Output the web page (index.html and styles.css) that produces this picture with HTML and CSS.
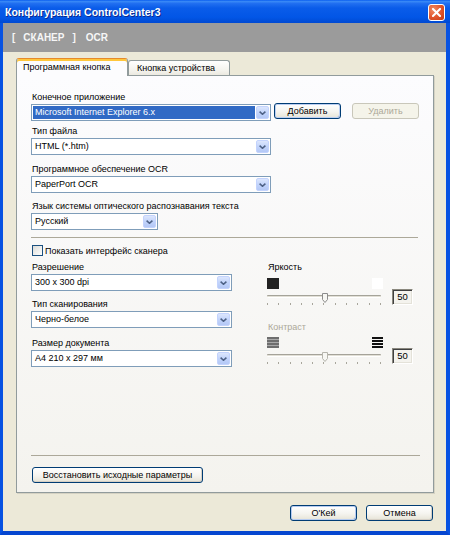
FILE: index.html
```html
<!DOCTYPE html>
<html lang="ru">
<head>
<meta charset="utf-8">
<title>Конфигурация ControlCenter3</title>
<link rel="stylesheet" href="styles.css">
</head>
<body>
<div class="window">
  <div class="titlebar">
    <span class="title">Конфигурация ControlCenter3</span>
    <span class="close"><svg width="9" height="9" viewBox="0 0 9 9"><path d="M1 1 L8 8 M8 1 L1 8" stroke="#fff" stroke-width="2" stroke-linecap="square"/></svg></span>
  </div>
  <div class="frame">
    <div class="header">
      <span>[</span><span class="h-scan">СКАНЕР</span><span class="h-br">]</span><span class="h-ocr">OCR</span>
    </div>
    <div class="body">
      <div class="tabs">
        <div class="tab active">Программная кнопка</div>
        <div class="tab inactive">Кнопка устройства</div>
      </div>
      <div class="panel">
        <div class="lbl">Конечное приложение</div>
        <div class="row">
          <div class="combo w240"><span class="val sel">Microsoft Internet Explorer 6.x</span><span class="arr"><svg width="7" height="4" viewBox="0 0 7 4"><path d="M0.6 0.6 L3.5 3.3 L6.4 0.6" stroke="#4d6185" stroke-width="1.5" fill="none"/></svg></span></div>
          <button class="btn add">Добавить</button>
          <button class="btn del disabled">Удалить</button>
        </div>

        <div class="lbl g2">Тип файла</div>
        <div class="combo w240"><span class="val">HTML (*.htm)</span><span class="arr"><svg width="7" height="4" viewBox="0 0 7 4"><path d="M0.6 0.6 L3.5 3.3 L6.4 0.6" stroke="#4d6185" stroke-width="1.5" fill="none"/></svg></span></div>

        <div class="lbl g3">Программное обеспечение OCR</div>
        <div class="combo w240"><span class="val">PaperPort OCR</span><span class="arr"><svg width="7" height="4" viewBox="0 0 7 4"><path d="M0.6 0.6 L3.5 3.3 L6.4 0.6" stroke="#4d6185" stroke-width="1.5" fill="none"/></svg></span></div>

        <div class="lbl g4">Язык системы оптического распознавания текста</div>
        <div class="combo w127"><span class="val">Русский</span><span class="arr"><svg width="7" height="4" viewBox="0 0 7 4"><path d="M0.6 0.6 L3.5 3.3 L6.4 0.6" stroke="#4d6185" stroke-width="1.5" fill="none"/></svg></span></div>

        <div class="sep sep1"></div>

        <div class="check-row"><span class="checkbox"></span><span>Показать интерфейс сканера</span></div>

        <div class="lower">
          <div class="col-left">
            <div class="lbl">Разрешение</div>
            <div class="combo w201"><span class="val">300 x 300 dpi</span><span class="arr"><svg width="7" height="4" viewBox="0 0 7 4"><path d="M0.6 0.6 L3.5 3.3 L6.4 0.6" stroke="#4d6185" stroke-width="1.5" fill="none"/></svg></span></div>
            <div class="lbl l2">Тип сканирования</div>
            <div class="combo w201"><span class="val">Черно-белое</span><span class="arr"><svg width="7" height="4" viewBox="0 0 7 4"><path d="M0.6 0.6 L3.5 3.3 L6.4 0.6" stroke="#4d6185" stroke-width="1.5" fill="none"/></svg></span></div>
            <div class="lbl l3">Размер документа</div>
            <div class="combo w201"><span class="val">A4 210 x 297 мм</span><span class="arr"><svg width="7" height="4" viewBox="0 0 7 4"><path d="M0.6 0.6 L3.5 3.3 L6.4 0.6" stroke="#4d6185" stroke-width="1.5" fill="none"/></svg></span></div>
          </div>
          <div class="col-right">
            <div class="lbl">Яркость</div>
            <div class="slider s1">
              <div class="slide-col">
                <div class="icons"><span class="ic-black"></span><span class="ic-white"></span></div>
                <div class="rail">
                  <div class="track"></div>
                  <div class="ticks"><i></i><i></i><i></i><i></i><i></i><i></i><i></i><i></i><i></i><i></i><i></i></div>
                  <svg class="thumb" width="6" height="10" viewBox="0 0 6 10"><path d="M0.5 0.5 H5.5 V6.5 L3 9.5 L0.5 6.5 Z" fill="#f7f7f3" stroke="#8c8c8c"/></svg>
                </div>
              </div>
              <div class="edit">50</div>
            </div>
            <div class="lbl dis c-lbl">Контраст</div>
            <div class="slider s2">
              <div class="slide-col">
                <div class="icons"><span class="ic-gray"></span><span class="ic-bars"></span></div>
                <div class="rail">
                  <div class="track"></div>
                  <div class="ticks"><i></i><i></i><i></i><i></i><i></i><i></i><i></i><i></i><i></i><i></i><i></i></div>
                  <svg class="thumb" width="6" height="10" viewBox="0 0 6 10"><path d="M0.5 0.5 H5.5 V6.5 L3 9.5 L0.5 6.5 Z" fill="#f7f7f3" stroke="#b5b4ac"/></svg>
                </div>
              </div>
              <div class="edit">50</div>
            </div>
          </div>
        </div>

        <div class="sep sep2"></div>
        <button class="btn reset">Восстановить исходные параметры</button>
      </div>
      <div class="actions">
        <button class="btn default">O'Кей</button>
        <button class="btn">Отмена</button>
      </div>
    </div>
  </div>
</div>
</body>
</html>
```

FILE: styles.css
```css
* { box-sizing: border-box; }
html, body { margin: 0; padding: 0; }
body {
  width: 450px;
  height: 535px;
  overflow: hidden;
  font-family: "Liberation Sans", Arial, sans-serif;
  font-size: 9px;
  color: #000;
  background: #0a4cdf;
}
.window {
  width: 450px;
  height: 535px;
  display: flex;
  flex-direction: column;
}
.titlebar {
  height: 23px;
  flex: none;
  display: flex;
  align-items: center;
  justify-content: space-between;
  padding: 0 5px 0 5px;
  background: linear-gradient(#0a5ef0 0%, #3a8af6 7%, #2270f1 14%, #0a5ce9 35%, #0256e6 75%, #0049d2 100%);
}
.title {
  color: #fff;
  font-weight: bold;
  font-size: 10.5px;
  text-shadow: 1px 1px 0 #0b2a8f;
  padding-top: 1px;
}
.close {
  width: 17px;
  height: 17px;
  border: 1px solid #fff;
  border-radius: 3px;
  background: radial-gradient(circle at 30% 30%, #f08a62, #e0532a 55%, #c43a12);
  display: flex;
  align-items: center;
  justify-content: center;
  margin-top: 2px;
}
.frame {
  flex: 1;
  display: flex;
  flex-direction: column;
  border-left: 3px solid #0752e2;
  border-right: 4px solid #0752e2;
  border-bottom: 4px solid #0546d0;
}
.header {
  height: 29px;
  flex: none;
  background: #9b9b9b;
  color: #f6f6f6;
  font-weight: bold;
  font-size: 10px;
  display: flex;
  align-items: center;
  padding-left: 9px;
}
.h-scan { margin-left: 8px; }
.h-br { margin-left: 8px; }
.h-ocr { margin-left: 10px; }
.body {
  flex: 1;
  background: #ece9d8;
  padding: 6px 12px 0 13px;
  display: flex;
  flex-direction: column;
}
.tabs {
  height: 17px;
  display: flex;
  align-items: flex-end;
  flex: none;
}
.tab {
  border: 1px solid #919b9c;
  border-bottom: none;
  border-radius: 3px 3px 0 0;
  display: flex;
  align-items: center;
  white-space: nowrap;
}
.tab.active {
  position: relative;
  z-index: 1;
  width: 112px;
  height: 18px;
  margin-bottom: -1px;
  padding: 0 0 1px 6px;
  background: #fcfcfe;
  border-top: 1px solid #e68b2c;
  box-shadow: inset 0 2px 0 #ffc73c;
}
.tab.inactive {
  width: 102px;
  height: 15px;
  padding-left: 8px;
  background: linear-gradient(#ffffff, #f3f2ec 70%, #ebe9e0);
}
.panel {
  width: 418px;
  height: 418px;
  flex: none;
  border: 1px solid #919b9c;
  background: linear-gradient(#fcfcfe, #f4f3ee);
  box-shadow: 1px 1px 0 #d5d2c3;
  padding: 14px 0 9px 14px;
  display: flex;
  flex-direction: column;
  align-items: flex-start;
}
.lbl {
  height: 14px;
  line-height: 14px;
  padding-left: 1px;
  white-space: nowrap;
}
.lbl.dis { color: #aca899; }
.g2 { margin-top: 3px; }
.g3 { margin-top: 7px; }
.g4 { margin-top: 6px; }
.row {
  display: flex;
  align-items: flex-start;
}
.combo {
  height: 17px;
  border: 1px solid #7f9db9;
  background: #fff;
  display: flex;
  padding: 1px;
}
.w240 { width: 240px; }
.w127 { width: 127px; }
.w201 { width: 201px; }
.combo .val {
  flex: 1;
  line-height: 13px;
  padding-left: 2px;
  white-space: nowrap;
  overflow: hidden;
}
.combo .val.sel {
  background: #316ac5;
  color: #fff;
  margin-right: 1px;
}
.combo .arr {
  width: 13px;
  flex: none;
  border: 1px solid #c3d3fd;
  border-radius: 2px;
  background: linear-gradient(#dce6fd, #c2d4fb 50%, #b4c8f6);
  display: flex;
  align-items: center;
  justify-content: center;
}
.btn {
  height: 16px;
  width: 67px;
  padding: 0;
  border: 1px solid #003c74;
  border-radius: 3px;
  background: linear-gradient(#ffffff, #f5f4ef 55%, #e6e3d6);
  box-shadow: inset -1px -1px 0 #d6d0c5;
  font-family: "Liberation Sans", Arial, sans-serif;
  font-size: 9px;
  color: #000;
  line-height: 14px;
}
.btn.add {
  margin-left: 3px;
  margin-top: -1px;
  box-shadow: inset 0 0 0 1px #bccff2, inset -1px -1px 0 #8fb0e6;
}
.btn.del { margin-left: 11px; margin-top: -1px; }
.btn.disabled {
  border-color: #c9c7ba;
  color: #aca899;
  background: #f5f4ea;
  box-shadow: none;
}
.sep {
  height: 1px;
  background: #aca899;
}
.sep1 { margin-top: 7px; width: 387px; }
.sep2 { margin-top: auto; width: 389px; }
.check-row {
  margin-top: 6px;
  height: 13px;
  display: flex;
  align-items: center;
  padding-left: 1px;
  white-space: nowrap;
}
.checkbox {
  width: 11px;
  height: 11px;
  border: 1px solid #1c5180;
  background: linear-gradient(135deg, #dcdcd7, #ffffff);
  margin-right: 2px;
}
.lower {
  margin-top: 3px;
  display: flex;
}
.col-left {
  width: 201px;
  display: flex;
  flex-direction: column;
}
.l2 { margin-top: 6px; }
.l3 { margin-top: 8px; }
.col-right {
  margin-left: 35px;
  display: flex;
  flex-direction: column;
}
.slider {
  display: grid;
  grid-template-columns: 116px 21px;
  column-gap: 9px;
  height: 27px;
}
.s1 { margin-top: 4px; }
.c-lbl { margin-top: 15px; }
.s2 { margin-top: 3px; }
.slide-col {
  display: flex;
  flex-direction: column;
}
.icons {
  height: 11px;
  display: flex;
  justify-content: space-between;
}
.icons span {
  display: block;
  width: 11px;
  height: 11px;
}
.ic-black { background: #222; width: 12px !important; }
.ic-white { background: #fff; }
.ic-gray {
  width: 12px !important;
  background: repeating-linear-gradient(#6e6e6e 0 2px, #a9a9a9 2px 3px);
}
.ic-bars {
  background: repeating-linear-gradient(#111 0 2px, transparent 2px 3px);
}
.rail {
  position: relative;
  height: 16px;
  width: 114px;
}
.track {
  position: absolute;
  left: 0;
  right: 0;
  top: 6px;
  height: 3px;
  border-top: 1px solid #a5a39a;
  border-bottom: 1px solid #ffffff;
  background: #e2e0d6;
  border-radius: 1px;
}
.ticks {
  position: absolute;
  left: 0;
  right: 0;
  top: 14px;
  height: 2px;
  display: flex;
  justify-content: space-between;
}
.ticks i {
  display: block;
  width: 1px;
  height: 2px;
  background: #a8a69c;
}
.thumb {
  position: absolute;
  left: 55px;
  top: 4px;
}
.edit {
  align-self: end;
  width: 21px;
  height: 16px;
  border: 1px solid;
  border-color: #8a887e #ffffff #ffffff #8a887e;
  box-shadow: inset 1px 1px 0 #404040, inset -1px -1px 0 #e4e2d9;
  background: #f4f3ee;
  font-size: 9.5px;
  line-height: 14px;
  text-align: center;
}
.btn.reset {
  width: 171px;
  margin-top: 11px;
  margin-left: 1px;
}
.actions {
  margin-top: 12px;
  display: flex;
  justify-content: flex-end;
  gap: 9px;
  padding-right: 1px;
}
.btn.default {
  box-shadow: inset 0 0 0 1px #b6cbf0, inset -1px -1px 0 #7da2e3;
}
```
